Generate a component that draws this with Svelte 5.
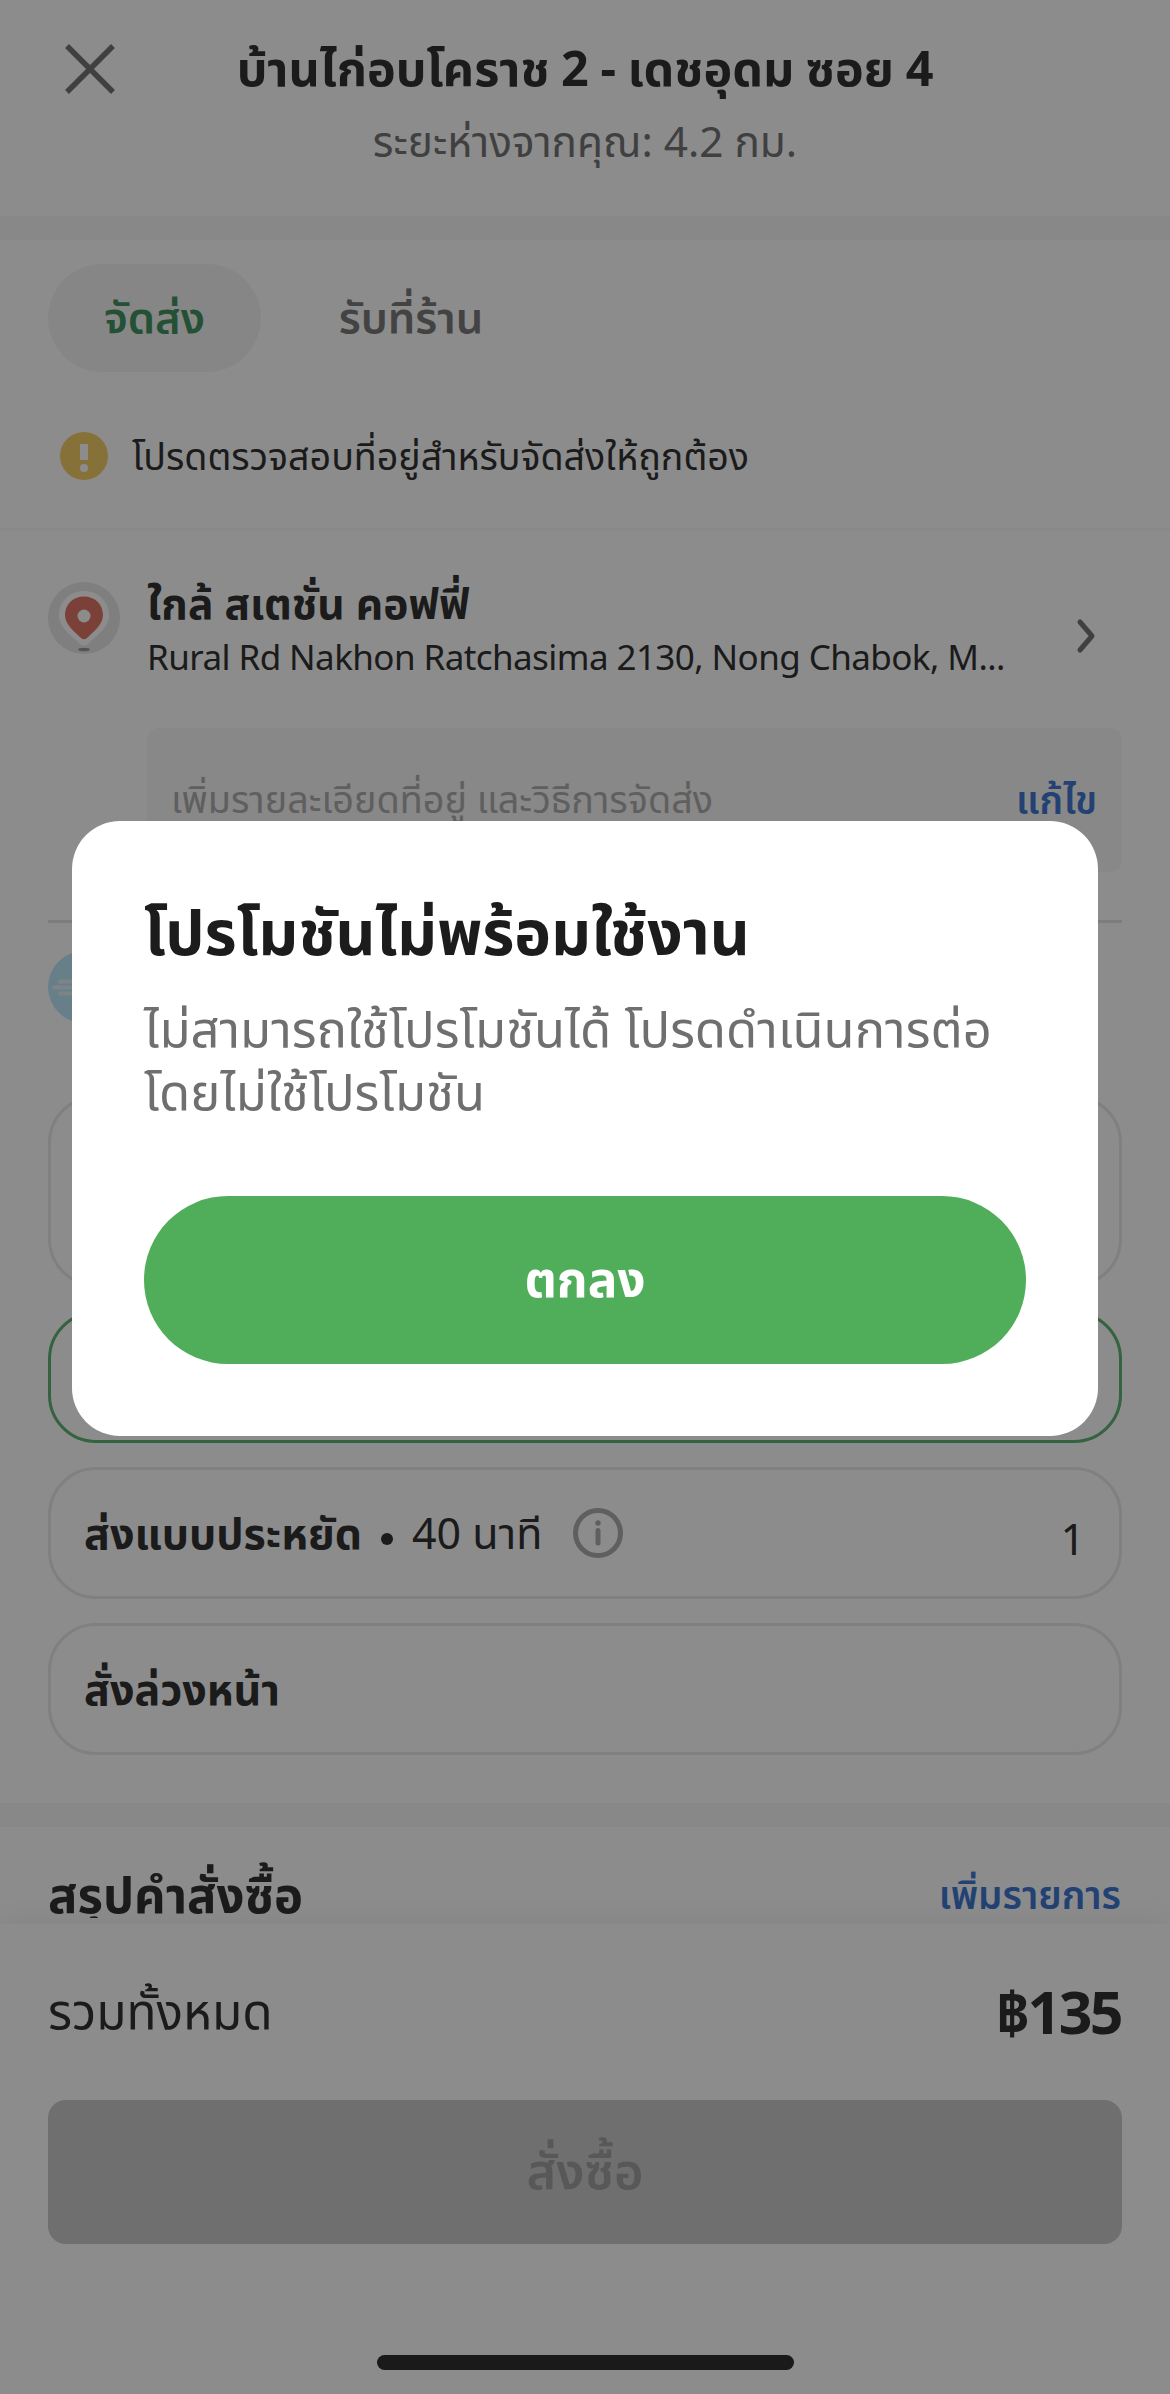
<script>
  const shop = {
    name: "บ้านไก่อบโคราช 2 - เดชอุดม ซอย 4",
    distance: "ระยะห่างจากคุณ: 4.2 กม."
  };

  const address = {
    title: "ใกล้ สเตชั่น คอฟฟี่",
    detail: "Rural Rd Nakhon Ratchasima 2130, Nong Chabok, M..."
  };

  let showDialog = true;
  let tab = "delivery";
</script>

<style>
  :global(body) {
    margin: 0;
    background: #fff;
    font-family: "Noto Sans", "Noto Sans Thai", sans-serif;
    white-space: nowrap;
  }

  .screen {
    width: 1170px;
    height: 2394px;
    overflow: hidden;
    background: #fff;
    color: #323232;
  }

  svg {
    display: block;
    flex: none;
  }

  h1,
  h2,
  h3,
  p {
    margin: 0;
    font-weight: 400;
  }

  button {
    border: 0;
    padding: 0;
    background: none;
    color: inherit;
    font: inherit;
    cursor: pointer;
  }

  .content {
    height: 1918px;
    overflow: hidden;
  }

  header {
    box-sizing: border-box;
    height: 216px;
    padding: 37px 65px 0;
    display: grid;
    grid-template-columns: 50px 1fr 50px;
    text-align: center;
  }

  .close {
    height: 50px;
    margin-top: 7px;
  }

  h1 {
    font-size: 48.5px;
    line-height: 60px;
    font-weight: 700;
    word-spacing: -1px;
  }

  .distance {
    margin-top: 18px;
    font-size: 42.3px;
    line-height: 52px;
    color: #757575;
  }

  .band {
    height: 24px;
    background: #f7f7f7;
  }

  .tabs {
    display: flex;
    padding: 24px 48px 0;
  }

  .tabs button {
    box-sizing: border-box;
    height: 108px;
    width: 213px;
    padding-top: 2px;
    border-radius: 54px;
    font-size: 43.5px;
    font-weight: 600;
    color: #7a7a7a;
  }

  .tabs button + button {
    width: 300px;
  }

  .tabs button.active {
    background: #f5f5f5;
    color: #429463;
  }

  .notice {
    display: flex;
    gap: 24px;
    padding: 60px 60px 48px;
    font-size: 37.6px;
    line-height: 48px;
    border-bottom: 3px solid #f9f9f9;
  }

  .address {
    display: flex;
    padding: 43px 74px 0 48px;
  }

  .address .pin {
    margin-top: 8px;
  }

  .address div {
    flex: 1;
    margin-left: 27px;
  }

  .address h2 {
    font-size: 42.5px;
    line-height: 58px;
    font-weight: 700;
  }

  .address p {
    padding-top: 1px;
    font-size: 35px;
    line-height: 48px;
    letter-spacing: -0.58px;
  }

  .address .chevron {
    margin-top: 42px;
  }

  .note {
    display: flex;
    align-items: center;
    justify-content: space-between;
    height: 144px;
    margin: 47px 48px 0 147px;
    padding: 3px 25px 0 24px;
    box-sizing: border-box;
    border-radius: 12px;
    background: #f7f7f7;
    font-size: 37.8px;
    color: #aeaeae;
  }

  .link {
    color: #4078d2;
    font-weight: 600;
    font-size: 38.4px;
  }

  .options {
    margin: 48px 48px 0;
    padding: 28px 0 48px;
    border-top: 3px solid #e4e4e4;
  }

  .card {
    box-sizing: border-box;
    height: 132px;
    margin-top: 24px;
    padding: 5px 34px 0 33px;
    border: 3px solid #e9e9e9;
    border-radius: 48px;
    display: flex;
    align-items: center;
    font-size: 43px;
  }

  .card.tall {
    height: 192px;
    margin-top: 72px;
  }

  .card.selected {
    border-color: #60b474;
  }

  .card strong {
    font-weight: 700;
  }

  .dot {
    width: 12px;
    height: 12px;
    margin: 6px 19px 0;
    border-radius: 50%;
    background: #323232;
  }

  .info {
    margin: -5px 0 0 31px;
  }

  .fee {
    margin: 6px 0 0 auto;
  }

  .summary {
    display: flex;
    justify-content: space-between;
    padding: 37px 49px 0 48px;
    line-height: 60px;
  }

  .summary h3 {
    font-size: 49px;
    font-weight: 700;
  }

  footer {
    position: relative;
    box-sizing: border-box;
    height: 470px;
    margin-top: 6px;
    padding: 47px 48px 24px;
    display: flex;
    flex-direction: column;
    background: #fff;
    box-shadow: 0 -4px 24px rgba(0, 0, 0, 0.06);
  }

  .total {
    display: flex;
    justify-content: space-between;
    line-height: 80px;
    font-size: 49.3px;
  }

  .total strong {
    margin-right: 1px;
    font-size: 59px;
    letter-spacing: -2.6px;
  }

  .order {
    height: 144px;
    margin-top: 49px;
    padding-top: 3px;
    border-radius: 18px;
    background: #cacaca;
    color: #a0a0a0;
    font-size: 50.5px;
    font-weight: 600;
  }

  .home {
    width: 417px;
    height: 15px;
    margin: auto auto 0;
    border-radius: 8px;
    background: #313131;
  }

  .backdrop {
    position: fixed;
    inset: 0;
    background: rgba(0, 0, 0, 0.45);
  }

  .dialog {
    box-sizing: border-box;
    height: 615px;
    margin: 821px 72px 0;
    padding: 70px 72px;
    border-radius: 48px;
    background: #fff;
    color: #1c1c1c;
  }

  .dialog h2 {
    font-size: 62px;
    line-height: 80px;
    font-weight: 700;
  }

  .dialog p {
    margin-top: 26px;
    font-size: 50.7px;
    line-height: 63px;
    color: #6f6f6f;
  }

  .dialog button {
    display: block;
    box-sizing: border-box;
    width: 882px;
    height: 168px;
    margin-top: 73px;
    padding-top: 3px;
    border-radius: 84px;
    background: #50ae5b;
    color: #fff;
    font-size: 49.5px;
    font-weight: 700;
  }
</style>

<div class="screen">
  <div class="content">
    <header>
      <button class="close" aria-label="ปิด">
        <svg width="50" height="50" viewBox="0 0 50 50">
          <path d="M2 2L48 48M48 2L2 48" stroke="#757575" stroke-width="5.5" />
        </svg>
      </button>
      <div>
        <h1>{shop.name}</h1>
        <p class="distance">{shop.distance}</p>
      </div>
    </header>

    <div class="band"></div>

    <div class="tabs">
      <button class:active={tab === "delivery"} on:click={() => (tab = "delivery")}>จัดส่ง</button>
      <button class:active={tab === "pickup"} on:click={() => (tab = "pickup")}>รับที่ร้าน</button>
    </div>

    <div class="notice">
      <svg width="48" height="48" viewBox="0 0 48 48">
        <circle cx="24" cy="24" r="24" fill="#f5d068" />
        <path d="M20 12h8v16h-8z" fill="#fff" />
        <circle cx="24" cy="36" r="4" fill="#fff" />
      </svg>
      <span>โปรดตรวจสอบที่อยู่สำหรับจัดส่งให้ถูกต้อง</span>
    </div>

    <div class="address">
      <svg class="pin" width="72" height="72" viewBox="0 0 72 72">
        <circle cx="36" cy="36" r="36" fill="#e7e7e7" />
        <path d="M36 9C22 9 11 19 11 33C11 46 24 54 32 62Q36 65 40 62C48 54 61 46 61 33C61 19 50 9 36 9Z" fill="#fff" />
        <path d="M36 14.500C25 14.500 17 22.500 17 33C17 43 27 50 33 56Q36 58.500 39 56C45 50 55 43 55 33C55 22.500 47 14.500 36 14.500Z" fill="#e07767" />
        <circle cx="36" cy="34" r="6.500" fill="#fff" />
        <ellipse cx="36" cy="67.500" rx="6" ry="1.700" fill="#999" />
      </svg>
      <div>
        <h2>{address.title}</h2>
        <p>{address.detail}</p>
      </div>
      <svg class="chevron" width="20" height="40" viewBox="0 0 20 40">
        <path d="M4 6L16 20L4 34" fill="none" stroke="#757575" stroke-width="5" stroke-linecap="round" stroke-linejoin="round" />
      </svg>
    </div>

    <div class="note">
      <span>เพิ่มรายละเอียดที่อยู่ และวิธีการจัดส่ง</span>
      <span class="link">แก้ไข</span>
    </div>

    <div class="options">
      <svg width="72" height="72" viewBox="0 0 72 72">
        <circle cx="36" cy="36" r="36" fill="#bce8f8" />
        <path d="M12 30.500H40M6 36.500H40M12 42.500H40" stroke="#e2f1f6" stroke-width="4" stroke-linecap="round" />
      </svg>
      <div class="card tall"></div>
      <div class="card selected"></div>
      <div class="card">
        <strong>ส่งแบบประหยัด</strong>
        <i class="dot"></i>
        <span>40 นาที</span>
        <svg class="info" width="50" height="50" viewBox="0 0 50 50">
          <circle cx="25" cy="25" r="22.500" fill="none" stroke="#adadad" stroke-width="5" />
          <circle cx="25" cy="15" r="2.700" fill="#adadad" />
          <path d="M25 22.500V35" stroke="#adadad" stroke-width="5" stroke-linecap="round" />
        </svg>
        <span class="fee">1</span>
      </div>
      <div class="card"><strong>สั่งล่วงหน้า</strong></div>
    </div>

    <div class="band"></div>

    <div class="summary">
      <h3>สรุปคำสั่งซื้อ</h3>
      <span class="link">เพิ่มรายการ</span>
    </div>
  </div>

  <footer>
    <div class="total">
      <span>รวมทั้งหมด</span>
      <strong>฿135</strong>
    </div>
    <button class="order">สั่งซื้อ</button>
    <div class="home"></div>
  </footer>
</div>

{#if showDialog}
  <div class="backdrop">
    <div class="dialog">
      <h2>โปรโมชันไม่พร้อมใช้งาน</h2>
      <p>ไม่สามารถใช้โปรโมชันได้ โปรดดำเนินการต่อ<br />โดยไม่ใช้โปรโมชัน</p>
      <button on:click={() => (showDialog = false)}>ตกลง</button>
    </div>
  </div>
{/if}
